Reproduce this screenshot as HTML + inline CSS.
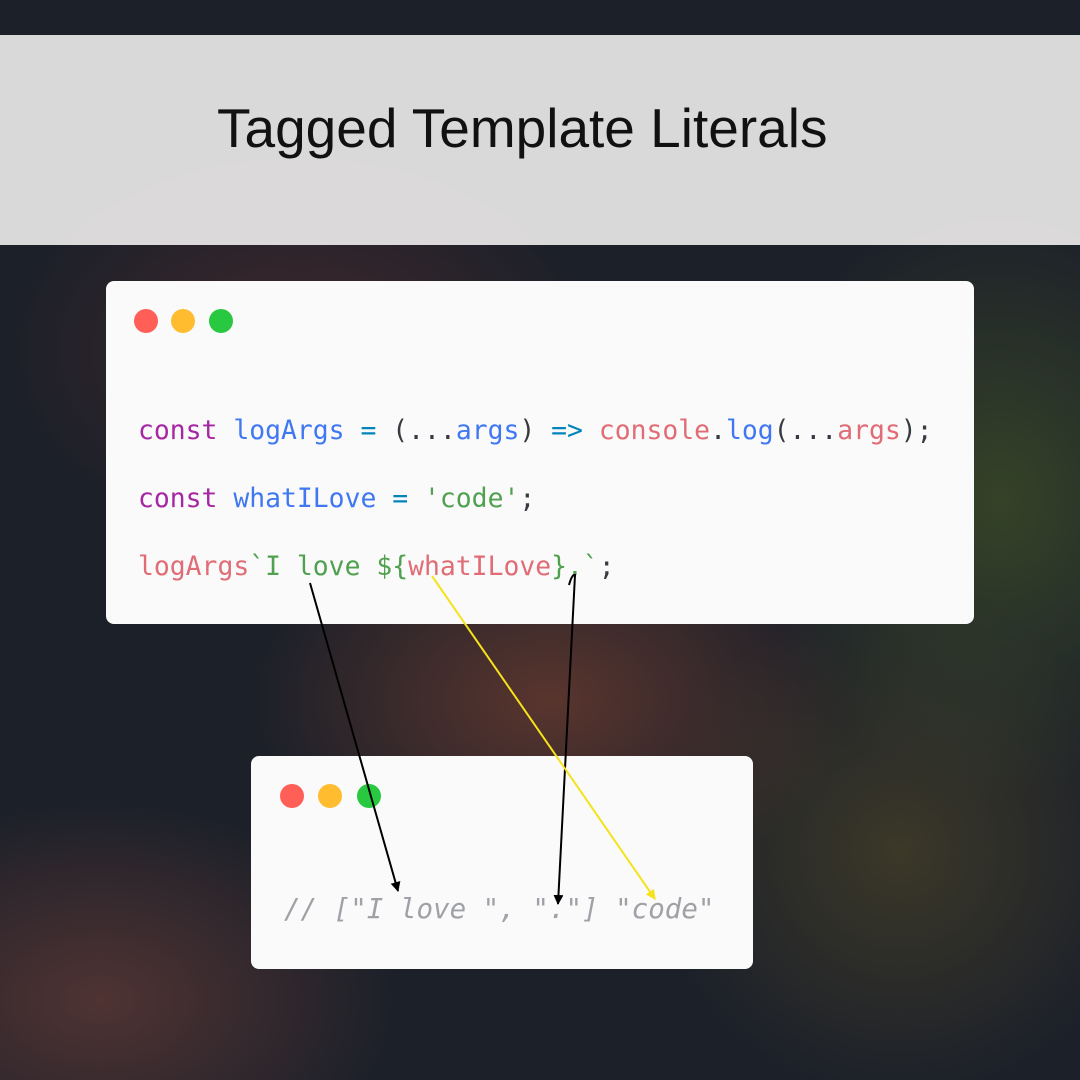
<!DOCTYPE html>
<html><head><style>
body{margin:0;width:1080px;height:1080px;overflow:hidden;position:relative;font-family:"Liberation Sans",sans-serif;
background:
radial-gradient(ellipse 300px 200px at 550px 700px,rgba(140,70,50,.55),transparent),
radial-gradient(ellipse 250px 300px at 1000px 500px,rgba(70,90,40,.6),transparent),
radial-gradient(ellipse 300px 200px at 100px 1000px,rgba(130,70,60,.5),transparent),
radial-gradient(ellipse 250px 250px at 900px 850px,rgba(90,80,40,.5),transparent),
radial-gradient(ellipse 300px 200px at 300px 350px,rgba(110,50,50,.45),transparent),
#1c2029;}
.band{position:absolute;left:0;top:35px;width:1080px;height:210px;background:rgba(240,237,237,.9)}
.title{position:absolute;left:217px;top:96px;font-size:55px;color:#111;white-space:nowrap}
.card{position:absolute;background:#fafafa;border-radius:8px}
.dot{position:absolute;width:24px;height:24px;border-radius:50%}
.code{position:absolute;font-family:"DejaVu Sans Mono","Liberation Mono",monospace;font-size:26.4px;white-space:pre;color:#383a42}
.k{color:#a626a4}.b{color:#4078f2}.o{color:#0184bc}.r{color:#e06c75}.g{color:#50a14f}
</style></head><body>
<div class="band"></div>
<div class="title">Tagged Template Literals</div>
<div class="card" style="left:106px;top:281px;width:868px;height:343px">
<div class="dot" style="left:28px;top:28px;background:#ff5f57"></div>
<div class="dot" style="left:65px;top:28px;background:#febc2e"></div>
<div class="dot" style="left:103px;top:28px;background:#28c840"></div>
</div>
<div class="code" style="left:138px;top:415px"><span class="k">const</span> <span class="b">logArgs</span> <span class="o">=</span> (...<span class="b">args</span>) <span class="o">=&gt;</span> <span class="r">console</span>.<span class="b">log</span>(...<span class="r">args</span>);</div>
<div class="code" style="left:138px;top:483px"><span class="k">const</span> <span class="b">whatILove</span> <span class="o">=</span> <span class="g">'code'</span>;</div>
<div class="code" style="left:138px;top:551px"><span class="r">logArgs</span><span class="g">`I love ${</span><span class="r">whatILove</span><span class="g">}.`</span>;</div>
<div class="card" style="left:251px;top:756px;width:502px;height:213px">
<div class="dot" style="left:29px;top:28px;background:#ff5f57"></div>
<div class="dot" style="left:67px;top:28px;background:#febc2e"></div>
<div class="dot" style="left:106px;top:28px;background:#28c840"></div>
</div>
<div class="code" style="left:284px;top:893px;font-size:27.5px;font-style:italic;color:#a0a1a7">// ["I love ", "."] "code"</div>
<svg width="1080" height="1080" style="position:absolute;left:0;top:0">
<defs>
<marker id="ab" markerWidth="10" markerHeight="10" refX="9" refY="5" orient="auto" markerUnits="userSpaceOnUse"><path d="M0,0 L10,5 L0,10 Z" fill="#000"/></marker>
<marker id="ay" markerWidth="10" markerHeight="10" refX="9" refY="5" orient="auto" markerUnits="userSpaceOnUse"><path d="M0,0 L10,5 L0,10 Z" fill="#f5e21a"/></marker>
</defs>
<line x1="310" y1="583" x2="398" y2="891" stroke="#000" stroke-width="2" marker-end="url(#ab)"/>
<path d="M569,585 Q572,574 575,575 L558,904" fill="none" stroke="#000" stroke-width="2" marker-end="url(#ab)"/>
<line x1="432" y1="576" x2="655" y2="899" stroke="#f5e21a" stroke-width="2" marker-end="url(#ay)"/>
</svg>
</body></html>
